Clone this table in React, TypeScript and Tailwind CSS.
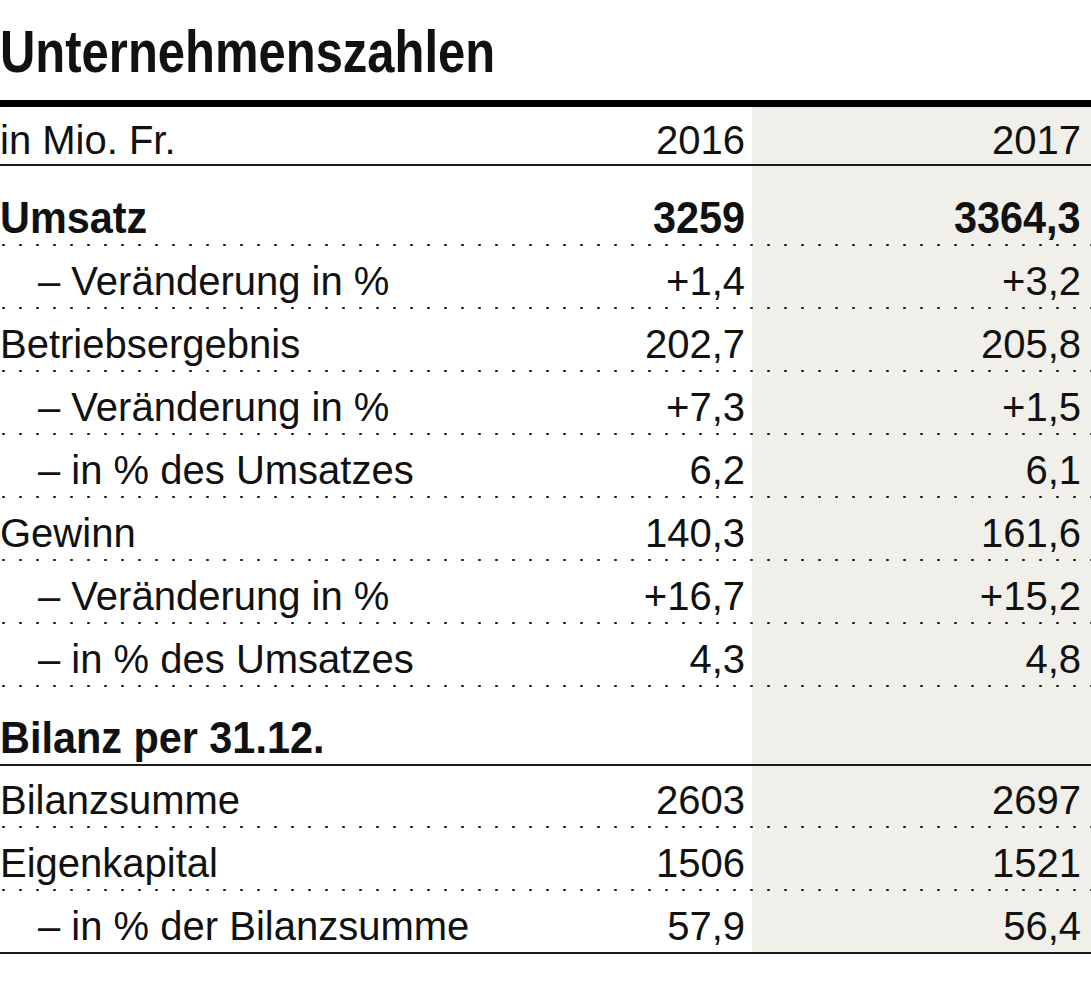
const GRAY = "bg-[#f0efea]";

type RowProps = {
  label: string;
  a?: string;
  b?: string;
  bold?: boolean;
  indent?: boolean;
  height: string;
};

// bold rows are a taller, condensed cut in the print layout
const Cond = ({ text, right }: { text: string; right?: boolean }) => (
  <span className={`inline-block scale-x-[0.92] ${right ? "origin-right" : "origin-left"}`}>{text}</span>
);

const Row = ({ label, a = "", b = "", bold, indent, height }: RowProps) => (
  <div className={`flex ${height} ${bold ? "font-bold text-[45px]" : "text-[40px]"} leading-[40px]`}>
    <div className={`flex flex-1 items-end pb-[6px] whitespace-nowrap ${indent ? "pl-[38px]" : ""}`}>
      {bold ? <Cond text={label} /> : label}
    </div>
    <div className="flex w-[200px] items-end justify-end pb-[6px] pr-[7px]">
      {bold ? <Cond text={a} right /> : a}
    </div>
    <div className={`flex w-[339px] items-end justify-end pb-[6px] pr-[10px] ${GRAY}`}>
      {bold ? <Cond text={b} right /> : b}
    </div>
  </div>
);

const Dotted = () => (
  <div className="flex h-[2px]">
    <div className="flex-1 bg-[radial-gradient(circle_at_3.5px_1px,#1a1a1a_1px,transparent_1.5px)] bg-[length:17px_2px] bg-repeat-x" />
    <div className={`w-[339px] ${GRAY} bg-[radial-gradient(circle_at_3.5px_1px,#1a1a1a_1px,transparent_1.5px)] bg-[length:17px_2px] bg-[position:13px_0] bg-repeat-x`} />
  </div>
);

const Rule = () => <div className="h-[2px] bg-[#1a1a1a]" />;

const results = [
  { label: "Umsatz", a: "3259", b: "3364,3", bold: true, height: "h-[78px]" },
  { label: "– Veränderung in %", a: "+1,4", b: "+3,2", indent: true },
  { label: "Betriebsergebnis", a: "202,7", b: "205,8" },
  { label: "– Veränderung in %", a: "+7,3", b: "+1,5", indent: true },
  { label: "– in % des Umsatzes", a: "6,2", b: "6,1", indent: true },
  { label: "Gewinn", a: "140,3", b: "161,6" },
  { label: "– Veränderung in %", a: "+16,7", b: "+15,2", indent: true },
  { label: "– in % des Umsatzes", a: "4,3", b: "4,8", indent: true },
];

export default function App() {
  return (
    <div className="h-[985px] w-[1091px] bg-white font-['Liberation_Sans',Arial,sans-serif] text-[#111]">
      <h1 className="h-[100px] pt-[5px] text-[59px] font-bold leading-[95px]">
        <span className="inline-block origin-left scale-x-[0.83]">Unternehmenszahlen</span>
      </h1>
      <div className="h-[7px] bg-black" />

      <div className="flex h-[57px] text-[40px] leading-[40px]">
        <div className="flex flex-1 items-end pb-[4px]">in Mio. Fr.</div>
        <div className="flex w-[200px] items-end justify-end pb-[4px] pr-[7px]">2016</div>
        <div className={`flex w-[339px] items-end justify-end pb-[4px] pr-[10px] ${GRAY}`}>2017</div>
      </div>
      <Rule />

      {results.map((r, i) => (
        <div key={i}>
          <Row {...r} height={r.height ?? "h-[61px]"} />
          <Dotted />
        </div>
      ))}

      <Row label="Bilanz per 31.12." bold height="h-[77px]" />
      <Rule />
      <Row label="Bilanzsumme" a="2603" b="2697" height="h-[60px]" />
      <Dotted />
      <Row label="Eigenkapital" a="1506" b="1521" height="h-[61px]" />
      <Dotted />
      <Row label="– in % der Bilanzsumme" a="57,9" b="56,4" indent height="h-[61px]" />
      <Rule />
    </div>
  );
}
